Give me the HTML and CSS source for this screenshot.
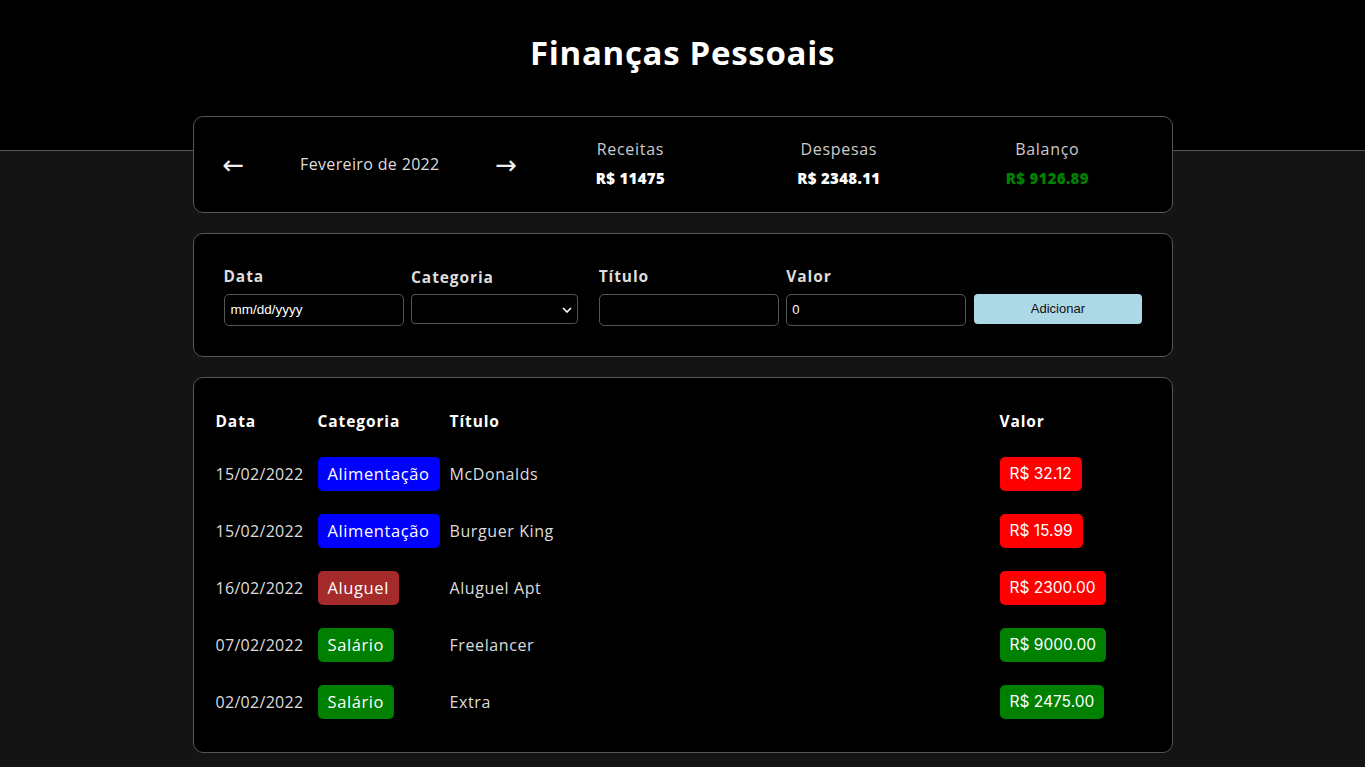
FILE: index.html
```html
<!DOCTYPE html>
<html lang="pt-BR">
<head>
<meta charset="utf-8">
<title>Finanças Pessoais</title>
<link rel="stylesheet" href="styles.css">
</head>
<body>
<header class="header">
  <h1 class="header-title">Finanças Pessoais</h1>
</header>
<main class="body">
  <section class="card info">
    <div class="month-area">
      <div class="month-arrow">&#8592;</div>
      <div class="month-title">Fevereiro de 2022</div>
      <div class="month-arrow">&#8594;</div>
    </div>
    <div class="resume-area">
      <div class="resume-item">
        <div class="resume-title">Receitas</div>
        <div class="resume-info">R$ 11475</div>
      </div>
      <div class="resume-item">
        <div class="resume-title">Despesas</div>
        <div class="resume-info">R$ 2348.11</div>
      </div>
      <div class="resume-item">
        <div class="resume-title">Balanço</div>
        <div class="resume-info positive">R$ 9126.89</div>
      </div>
    </div>
  </section>

  <section class="card input-area">
    <label class="input-label">
      <div class="input-title">Data</div>
      <div class="fake-input">mm/dd/yyyy</div>
    </label>
    <label class="input-label">
      <div class="input-title shift">Categoria</div>
      <div class="fake-select"><svg class="chev" width="10" height="6" viewBox="0 0 10 6"><path d="M1 1l4 4 4-4" fill="none" stroke="#fff" stroke-width="1.6"/></svg></div>
    </label>
    <label class="input-label">
      <div class="input-title">Título</div>
      <div class="fake-input"></div>
    </label>
    <label class="input-label">
      <div class="input-title">Valor</div>
      <div class="fake-input value">0</div>
    </label>
    <label class="input-label">
      <div class="input-title">&nbsp;</div>
      <div class="add-button">Adicionar</div>
    </label>
  </section>

  <section class="card table-card">
    <table class="table">
      <thead>
        <tr>
          <th class="col-date">Data</th>
          <th class="col-cat">Categoria</th>
          <th class="col-title">Título</th>
          <th class="col-value">Valor</th>
        </tr>
      </thead>
      <tbody>
        <tr>
          <td class="date">15/02/2022</td>
          <td><span class="badge blue">Alimentação</span></td>
          <td>McDonalds</td>
          <td><span class="badge money red">R$ 32.12</span></td>
        </tr>
        <tr>
          <td class="date">15/02/2022</td>
          <td><span class="badge blue">Alimentação</span></td>
          <td>Burguer King</td>
          <td><span class="badge money red">R$ 15.99</span></td>
        </tr>
        <tr>
          <td class="date">16/02/2022</td>
          <td><span class="badge brown">Aluguel</span></td>
          <td>Aluguel Apt</td>
          <td><span class="badge money red">R$ 2300.00</span></td>
        </tr>
        <tr>
          <td class="date">07/02/2022</td>
          <td><span class="badge green">Salário</span></td>
          <td>Freelancer</td>
          <td><span class="badge money green">R$ 9000.00</span></td>
        </tr>
        <tr>
          <td class="date">02/02/2022</td>
          <td><span class="badge green">Salário</span></td>
          <td>Extra</td>
          <td><span class="badge money green">R$ 2475.00</span></td>
        </tr>
      </tbody>
    </table>
  </section>
</main>
</body>
</html>
```

FILE: styles.css
```css
* { box-sizing: border-box; }

html, body {
  margin: 0;
  padding: 0;
}

body {
  background: #141414;
  font-family: "Open Sans", "DejaVu Sans", sans-serif;
  color: #fff;
  min-height: 767px;
}

.header {
  background: #000;
  height: 151px;
  border-bottom: 1px solid #555;
  text-align: center;
  padding-top: 30px;
}

.header-title {
  margin: 0;
  font-size: 33px;
  line-height: 46px;
  font-weight: 700;
  letter-spacing: 0.7px;
  color: #fff;
}

.body {
  max-width: 980px;
  margin: -35px auto 0;
}

.card {
  background: #000;
  border: 1px solid #555;
  border-radius: 10px;
}

/* info */
.info {
  height: 97px;
  padding: 0 20px;
  display: flex;
  align-items: center;
}

.month-area {
  flex: 1;
  display: flex;
  align-items: center;
  justify-content: space-between;
}

.month-arrow {
  width: 40px;
  text-align: center;
  font-size: 26px;
  line-height: 30px;
  color: #eee;
  font-family: "DejaVu Sans", sans-serif;
}

.month-title {
  font-size: 16px;
  letter-spacing: 0.35px;
  color: #ddd;
  margin-top: -2px;
}

.resume-area {
  flex: 2;
  display: flex;
  margin-top: -3px;
}

.resume-item {
  flex: 1;
  text-align: center;
}

.resume-title {
  font-size: 16px;
  letter-spacing: 0.7px;
  color: #ccc;
  line-height: 22px;
  margin-bottom: 8px;
}

.resume-info {
  font-size: 15px;
  font-weight: 800;
  line-height: 20px;
  color: #fff;
  letter-spacing: 0.35px;
}

.resume-info.positive { color: #008000; }

/* inputs */
.input-area {
  margin-top: 20px;
  height: 124px;
  padding: 32px 30px 0;
  display: grid;
  grid-template-columns: repeat(5, minmax(0, 1fr));
  column-gap: 20px;
}

.input-label {
  display: block;
  min-width: 0;
}

.input-title {
  font-size: 15.5px;
  font-weight: 700;
  letter-spacing: 0.9px;
  color: #ddd;
  line-height: 21px;
  margin-bottom: 7px;
}

.input-title.shift {
  margin-top: 1px;
  margin-bottom: 6px;
}

.fake-input {
  width: 180px;
  height: 32px;
  border: 1px solid #555;
  border-radius: 5px;
  background: #000;
  color: #fff;
  font-family: "Liberation Sans", Arial, sans-serif;
  font-size: 13.5px;
  line-height: 30px;
  padding: 0 6px;
}

.fake-input.value {
  font-size: 13px;
  padding: 0 5px;
}

.fake-select {
  width: 167px;
  height: 30px;
  margin-top: 1px;
  border: 1px solid #555;
  border-radius: 4px;
  background: #000;
  position: relative;
}

.chev {
  position: absolute;
  right: 5px;
  top: 12px;
}

.add-button {
  width: 168px;
  height: 30px;
  margin-top: 1px;
  background: #add8e6;
  border-radius: 4px;
  color: #111;
  text-align: center;
  font-family: "Liberation Sans", Arial, sans-serif;
  font-size: 13px;
  line-height: 30px;
}

/* table */
.table-card {
  margin-top: 20px;
  padding: 20px 20px 21px 22px;
}

.table {
  width: 100%;
  border-collapse: collapse;
  table-layout: fixed;
}

.table th {
  text-align: left;
  font-size: 15.5px;
  font-weight: 700;
  letter-spacing: 0.9px;
  color: #fff;
  padding: 11px 0 13px;
  line-height: 24px;
}

.col-date { width: 102px; }
.col-cat { width: 132px; }
.col-title { width: 550px; }

.table td {
  font-size: 16px;
  letter-spacing: 0.6px;
  color: #ddd;
  padding: 11px 0 12px;
  line-height: 34px;
  height: 57px;
  white-space: nowrap;
}

.table td.date {
  letter-spacing: 0.3px;
}

.badge {
  display: inline-block;
  height: 34px;
  line-height: 34px;
  padding: 0 10px;
  border-radius: 5px;
  color: #fff;
  font-size: 16.5px;
  letter-spacing: 0.6px;
  vertical-align: top;
}

.badge.money {
  font-family: "Inter", "Roboto", sans-serif;
  font-size: 15.5px;
  letter-spacing: 0;
}

.badge.blue { background: #0000ff; }
.badge.brown { background: #a52a2a; }
.badge.green { background: #008000; }
.badge.red { background: #ff0000; }
```
